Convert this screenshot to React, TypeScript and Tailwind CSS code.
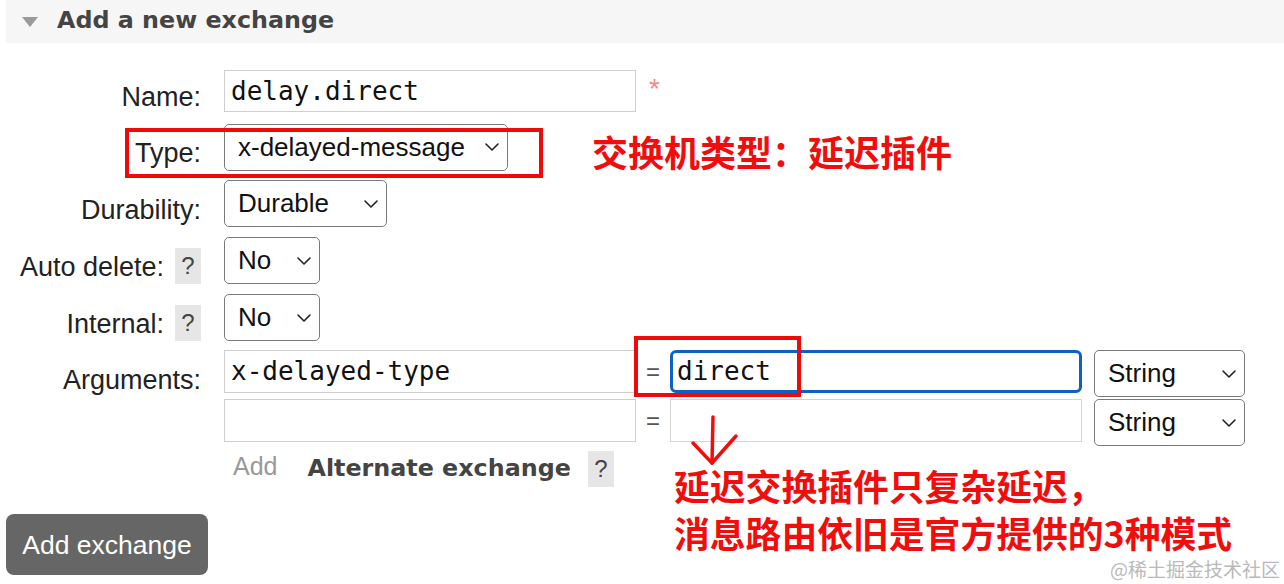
import React from 'react';

const labelFont = { fontFamily: '"Liberation Sans", Arial, sans-serif' };
const monoFont = { fontFamily: '"DejaVu Sans Mono", monospace' };
const boldFont = { fontFamily: '"DejaVu Sans", Verdana, sans-serif' };
const cjkFont = { fontFamily: '"Noto Sans CJK SC", "Noto Sans", sans-serif' };

const Chevron = () => (
  <svg width="16" height="10" viewBox="0 0 16 10" fill="none" stroke="#222" strokeWidth="1.6" strokeLinecap="round" strokeLinejoin="round">
    <path d="M2 2l6 6 6-6" />
  </svg>
);

interface FakeSelectProps {
  value: string;
  width: string;
}

const FakeSelect = ({ value, width }: FakeSelectProps) => (
  <div
    className={`${width} h-[47px] shrink-0 border-[1.5px] border-[#7a7a7a] rounded-[5px] bg-white flex items-center justify-between pl-[13px] pr-[7px] text-[26px] text-[#111]`}
    style={labelFont}
  >
    <span>{value}</span>
    <Chevron />
  </div>
);

const Help = () => (
  <span className="w-[26px] h-[36px] bg-[#e6e6e6] text-[#444] text-[24px] flex items-center justify-center" style={labelFont}>
    ?
  </span>
);

interface RowProps {
  label: string;
  help?: boolean;
  className?: string;
  children: React.ReactNode;
}

const Row = ({ label, help, className, children }: RowProps) => (
  <div className={`flex items-center ${className ?? ''}`}>
    <div className="w-[201px] shrink-0 flex items-center justify-end">
      <span className="text-[27px] text-[#222] pt-[13px]" style={labelFont}>{label}</span>
      {help && <span className="ml-[11px] pt-[11px]"><Help /></span>}
    </div>
    <div className="ml-[23px] flex items-center">{children}</div>
  </div>
);

export default function App() {
  return (
    <div className="relative w-[1284px] h-[584px] bg-white overflow-hidden">
      {/* header */}
      <div className="ml-[6px] h-[43px] bg-[#f6f6f6] flex items-center">
        <div className="ml-[16px] w-0 h-0 border-l-[8px] border-r-[8px] border-t-[10px] border-l-transparent border-r-transparent border-t-[#9a9a9a]" />
        <h2 className="ml-[19px] -mt-[2px] text-[23.8px] font-bold text-[#444]" style={boldFont}>Add a new exchange</h2>
      </div>

      <div className="flex flex-col">
        <Row label="Name:" className="mt-[27px] h-[42px]">
          <div className="w-[412px] h-[42px] border-[1.5px] border-[#cfcfcf] flex items-center pl-[6px] text-[26px] text-[#111]" style={monoFont}>
            delay.direct
          </div>
          <span className="ml-[13px] -mt-[4px] text-[28px] leading-[28px] text-[#f08a8a]" style={labelFont}>*</span>
        </Row>
        <Row label="Type:" className="mt-[12px] h-[46px]">
          <FakeSelect value="x-delayed-message" width="w-[284px]" />
        </Row>
        <Row label="Durability:" className="mt-[10px] h-[47px]">
          <FakeSelect value="Durable" width="w-[163px]" />
        </Row>
        <Row label="Auto delete:" help className="mt-[10px] h-[47px]">
          <FakeSelect value="No" width="w-[96px]" />
        </Row>
        <Row label="Internal:" help className="mt-[10px] h-[47px]">
          <FakeSelect value="No" width="w-[96px]" />
        </Row>
        <Row label="Arguments:" className="mt-[9px] h-[47px]">
          <div className="flex items-start h-[47px]">
            <div className="w-[412px] h-[43px] border-[1.5px] border-[#cfcfcf] flex items-center pl-[6px] text-[26px] text-[#111]" style={monoFont}>
              x-delayed-type
            </div>
            <span className="w-[34px] h-[43px] flex items-center justify-center text-[24px] text-[#555]" style={labelFont}>=</span>
            <div className="w-[412px] h-[43px] border-[3px] border-[#0b62c4] rounded-[6px] flex items-center pl-[4px] text-[26px] text-[#111]" style={monoFont}>
              direct
            </div>
            <div className="ml-[12px]">
              <FakeSelect value="String" width="w-[151px]" />
            </div>
          </div>
        </Row>
        <div className="flex items-start h-[47px] mt-[2px] ml-[224px]">
          <div className="w-[412px] h-[43px] border-[1.5px] border-[#cfcfcf]" />
          <span className="w-[34px] h-[43px] flex items-center justify-center text-[24px] text-[#555]" style={labelFont}>=</span>
          <div className="w-[412px] h-[43px] border-[1.5px] border-[#d4d4d4]" />
          <div className="ml-[12px]">
            <FakeSelect value="String" width="w-[151px]" />
          </div>
        </div>
        <div className="flex items-center ml-[233px] mt-[4px] h-[37px]">
          <span className="text-[25px] text-[#999] -mt-[4px]" style={labelFont}>Add</span>
          <span className="ml-[30px] text-[23.8px] font-bold text-[#444]" style={boldFont}>Alternate exchange</span>
          <span className="ml-[17px]"><Help /></span>
        </div>
        <div className="mt-[27px] ml-[6px]">
          <button className="w-[202px] h-[61px] bg-[#666] rounded-[8px] text-white text-[26.5px] pt-[2px]" style={labelFont}>
            Add exchange
          </button>
        </div>
      </div>

      {/* annotations */}
      <div className="absolute left-[125px] top-[128px] w-[418px] h-[50px] border-[4px] border-[#ee0a0a]" />
      <div className="absolute left-[634px] top-[336px] w-[167px] h-[61px] border-[4px] border-[#ee0a0a]" />
      <div className="absolute left-[592px] top-[131px] text-[36px] leading-[40px] font-bold text-[#f20d0d]" style={cjkFont}>
        交换机类型：延迟插件
      </div>
      <svg className="absolute left-[686px] top-[412px]" width="60" height="56" viewBox="0 0 60 56" fill="none" stroke="#f20d0d" strokeWidth="3.5" strokeLinecap="round" strokeLinejoin="round">
        <path d="M27 5 L26 51" />
        <path d="M7 31 L26 51 L50 24" />
      </svg>
      <div className="absolute left-[674px] top-[465px] text-[35.8px] leading-[40px] font-bold text-[#f20d0d]" style={cjkFont}>
        <div>延迟交换插件只复杂延迟，</div>
        <div className="mt-[7px]">消息路由依旧是官方提供的3种模式</div>
      </div>
      <div className="absolute right-[4px] top-[560px] text-[19px] leading-[18px] text-[#b9b9b9]" style={cjkFont}>
        @稀土掘金技术社区
      </div>
    </div>
  );
}
